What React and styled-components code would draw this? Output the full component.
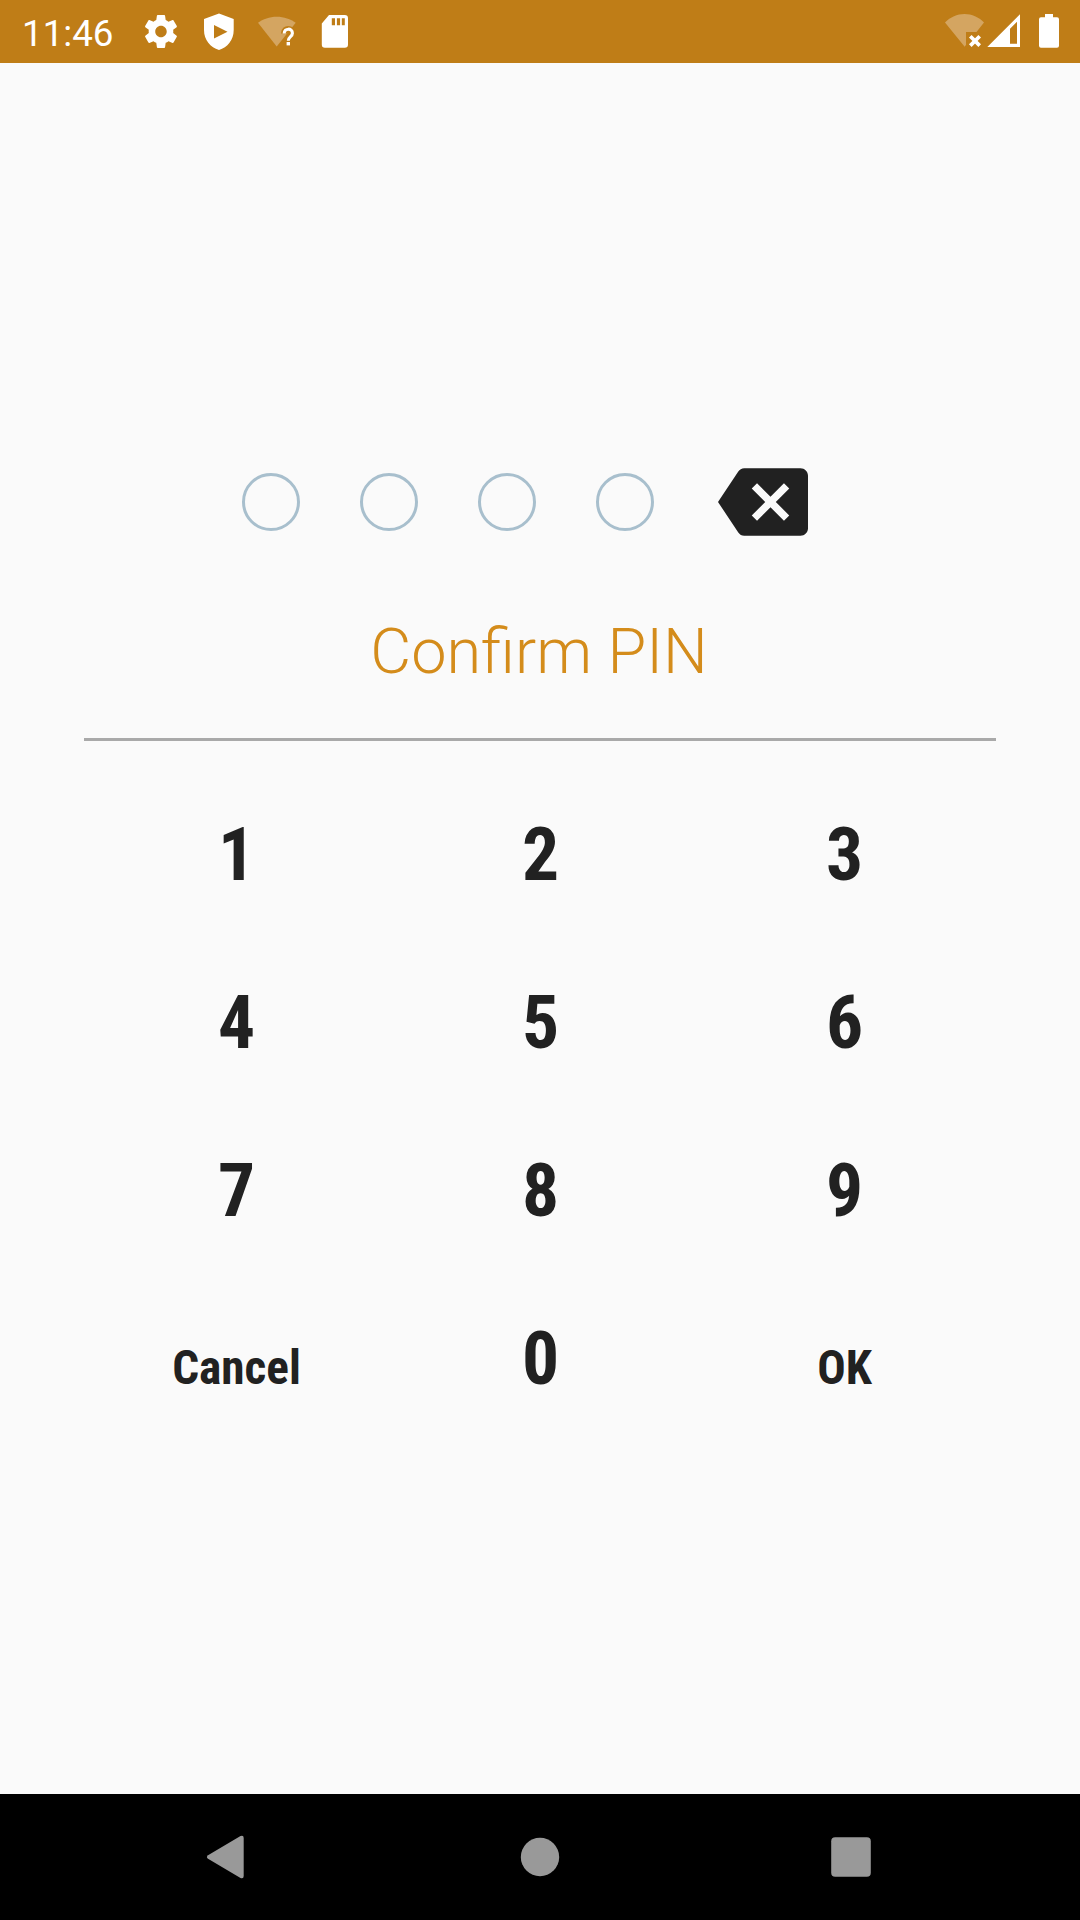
import React from "react";
import styled, { createGlobalStyle } from "styled-components";

const GlobalStyle = createGlobalStyle`
  * { box-sizing: border-box; }
  html, body { margin: 0; padding: 0; background: #fafafa; }
  body { font-family: Roboto, "Liberation Sans", sans-serif; }
`;

const Screen = styled.div`
  display: flex;
  flex-direction: column;
  width: 1080px;
  height: 1920px;
  overflow: hidden;
  background: #fafafa;
`;

const StatusBar = styled.header`
  display: flex;
  justify-content: space-between;
  align-items: center;
  flex: none;
  height: 63px;
  padding: 0 15px 0 22px;
  background: #bf7d17;
  color: #fff;
`;

const StatusGroup = styled.div`
  display: flex;
  align-items: center;
  height: 63px;
`;

const Clock = styled.span`
  width: 109px;
  font-size: 36.75px;
  line-height: 43px;
  padding-top: 3px;
  white-space: nowrap;
`;

const StatusIcon = styled.svg`
  display: block;
  flex: none;
  width: ${(p) => p.$width}px;
  height: 63px;
`;

const Content = styled.main`
  flex: 1;
  display: flex;
  flex-direction: column;
  align-items: center;
  padding: 394px 84px 0;
`;

const PinRow = styled.div`
  display: flex;
  align-items: center;
  gap: 60px;
  height: 90px;
  padding-right: 30px;
`;

const PinDot = styled.span`
  width: 58px;
  height: 58px;
  border: 3px solid #a8bfcd;
  border-radius: 50%;
`;

const BackspaceButton = styled.button`
  display: block;
  width: 90px;
  height: 90px;
  margin-left: 4px;
  padding: 0;
  border: 0;
  background: none;
  svg { display: block; width: 90px; height: 90px; fill: #212121; }
`;

const Title = styled.h1`
  margin: 68px 0 0;
  height: 123px;
  padding-right: 2px;
  font-size: 63px;
  line-height: 74px;
  font-weight: 300;
  color: #d48c1b;
`;

const Divider = styled.hr`
  width: 912px;
  height: 3px;
  margin: 0;
  border: 0;
  background: #a9a9a9;
`;

const Keypad = styled.div`
  display: grid;
  grid-template-columns: repeat(3, 304px);
  grid-auto-rows: 168px;
  align-items: baseline;
  padding-top: 71px;
`;

const Key = styled.button`
  padding: 0 0 0 1px;
  border: 0;
  background: none;
  color: #212121;
  font-family: "Roboto Condensed", Roboto, sans-serif;
  font-stretch: 75%;
  font-weight: 700;
  font-size: ${(p) => (p.$action ? 47.25 : 73.5)}px;
  line-height: 86px;
  text-align: center;
`;

const NavBar = styled.nav`
  display: flex;
  align-items: center;
  justify-content: center;
  gap: 184px;
  flex: none;
  height: 126px;
  background: #000;
`;

const NavButton = styled.button`
  width: 126px;
  height: 126px;
  padding: 0;
  border: 0;
  background: none;
  svg { display: block; width: 126px; height: 126px; fill: #999; }
`;

const KEYS = ["1", "2", "3", "4", "5", "6", "7", "8", "9", "Cancel", "0", "OK"];

const QUESTION_HOOK = "M37.2 33.4 C37.2 27.8 45.4 27.8 45.4 33.2 C45.4 36.7 41.3 36.5 41.3 40.8";

export default function App() {
  return (
    <Screen>
      <GlobalStyle />
      <StatusBar>
        <StatusGroup>
          <Clock>11:46</Clock>
          <StatusIcon $width={58} viewBox="0 0 58 63">
            <path transform="translate(10.3 11.8) scale(1.64)" fill="#fff" d="M19.43 12.98c.04-.32.07-.64.07-.98s-.03-.66-.07-.98l2.11-1.65c.19-.15.24-.42.12-.64l-2-3.46c-.12-.22-.39-.3-.61-.22l-2.49 1c-.52-.4-1.08-.73-1.69-.98l-.38-2.65C14.46 2.18 14.25 2 14 2h-4c-.25 0-.46.18-.49.42l-.38 2.65c-.61.25-1.17.59-1.69.98l-2.49-1c-.23-.09-.49 0-.61.22l-2 3.46c-.13.22-.07.49.12.64l2.11 1.65c-.04.32-.07.65-.07.98s.03.66.07.98l-2.11 1.65c-.19.15-.24.42-.12.64l2 3.46c.12.22.39.3.61.22l2.49-1c.52.4 1.08.73 1.69.98l.38 2.65c.03.24.24.42.49.42h4c.25 0 .46-.18.49-.42l.38-2.65c.61-.25 1.17-.59 1.69-.98l2.49 1c.23.09.49 0 .61-.22l2-3.46c.12-.22.07-.49-.12-.64l-2.11-1.65zM12 15.5c-1.93 0-3.5-1.57-3.5-3.5s1.57-3.5 3.5-3.5 3.5 1.57 3.5 3.5-1.57 3.5-3.5 3.5z" />
          </StatusIcon>
          <StatusIcon $width={58} viewBox="0 0 58 63">
            <path fill="#fff" fillRule="evenodd" d="M30 13.5 L44.7 19 V30 C44.7 40 38.5 47.5 30 50 C21.5 47.5 15 40 15 30 V19 Z M25 25 V38.5 L38.5 31.7 Z" />
          </StatusIcon>
          <StatusIcon $width={58} viewBox="0 0 58 63">
            <path fill="#d4a561" d="M11 22.8 C16 19 22.5 16.7 29.7 16.7 C37 16.7 43.5 19 48.7 22.8 L29.7 46.5 Z" />
            <path fill="none" stroke="#bf7d17" strokeWidth="6.5" d={QUESTION_HOOK} />
            <path fill="none" stroke="#fff" strokeWidth="3.1" d={QUESTION_HOOK} />
            <rect fill="#fff" x="39.6" y="42" width="3.4" height="3.4" />
          </StatusIcon>
          <StatusIcon $width={58} viewBox="2 0 58 63">
            <path fill="#fff" fillRule="evenodd" d="M26 15 H41.8 Q45 15 45 18.2 V44.6 Q45 47.8 41.8 47.8 H22 Q18.8 47.8 18.8 44.6 V23.5 Z M28.8 18.3 V25.2 H32 V18.3 Z M33.9 18.3 V25.2 H37.1 V18.3 Z M38.8 18.3 V25.2 H41.8 V18.3 Z" />
          </StatusIcon>
        </StatusGroup>
        <StatusGroup>
          <StatusIcon $width={42} viewBox="943 0 42 63">
            <path fill="#d4a561" d="M945 22.5 C950.5 17 957 14 964.5 14 C972 14 978.5 17 984 22.5 L976.5 32 H966 V44.8 L964.7 46.7 Z" />
            <path stroke="#fff" strokeWidth="3.7" d="M970.3 36.2 L979.7 45.6 M979.7 36.2 L970.3 45.6" />
          </StatusIcon>
          <StatusIcon $width={40} viewBox="985 0 40 63">
            <path fill="#fff" fillRule="evenodd" d="M987.3 47 L1020 14.2 V47 Z M1010 28.7 V43.8 H1017 V21.7 Z" />
          </StatusIcon>
          <StatusIcon $width={40} viewBox="1025 0 40 63">
            <path fill="#fff" d="M1045 14 H1053 V17.2 H1057 Q1059 17.2 1059 19.2 V45.8 Q1059 47.8 1057 47.8 H1041 Q1039 47.8 1039 45.8 V19.2 Q1039 17.2 1041 17.2 H1045 Z" />
          </StatusIcon>
        </StatusGroup>
      </StatusBar>

      <Content>
        <PinRow>
          <PinDot />
          <PinDot />
          <PinDot />
          <PinDot />
          <BackspaceButton aria-label="Backspace">
            <svg viewBox="0 0 24 24">
              <path d="M22 3H7c-.69 0-1.23.35-1.59.88L0 12l5.41 8.11c.36.53.9.89 1.59.89h15c1.1 0 2-.9 2-2V5c0-1.1-.9-2-2-2zm-3 12.59L17.59 17 14 13.41 10.41 17 9 15.59 12.59 12 9 8.41 10.41 7 14 10.59 17.59 7 19 8.41 15.41 12 19 15.59z" />
            </svg>
          </BackspaceButton>
        </PinRow>
        <Title>Confirm PIN</Title>
        <Divider />
        <Keypad>
          {KEYS.map((k) => (
            <Key key={k} $action={k.length > 1}>{k}</Key>
          ))}
        </Keypad>
      </Content>

      <NavBar>
        <NavButton aria-label="Back">
          <svg viewBox="167 1794 126 126">
            <path d="M208 1855.2 L240.5 1836 Q243.7 1834.8 243.7 1838 V1876 Q243.7 1879.2 240.5 1878 L208 1858.8 Q205.8 1857 208 1855.2 Z" />
          </svg>
        </NavButton>
        <NavButton aria-label="Home">
          <svg viewBox="477 1794 126 126">
            <circle cx="540" cy="1857" r="19.2" />
          </svg>
        </NavButton>
        <NavButton aria-label="Recent apps">
          <svg viewBox="787 1794 126 126">
            <rect x="831.2" y="1837.2" width="39.6" height="39.6" rx="4" />
          </svg>
        </NavButton>
      </NavBar>
    </Screen>
  );
}
